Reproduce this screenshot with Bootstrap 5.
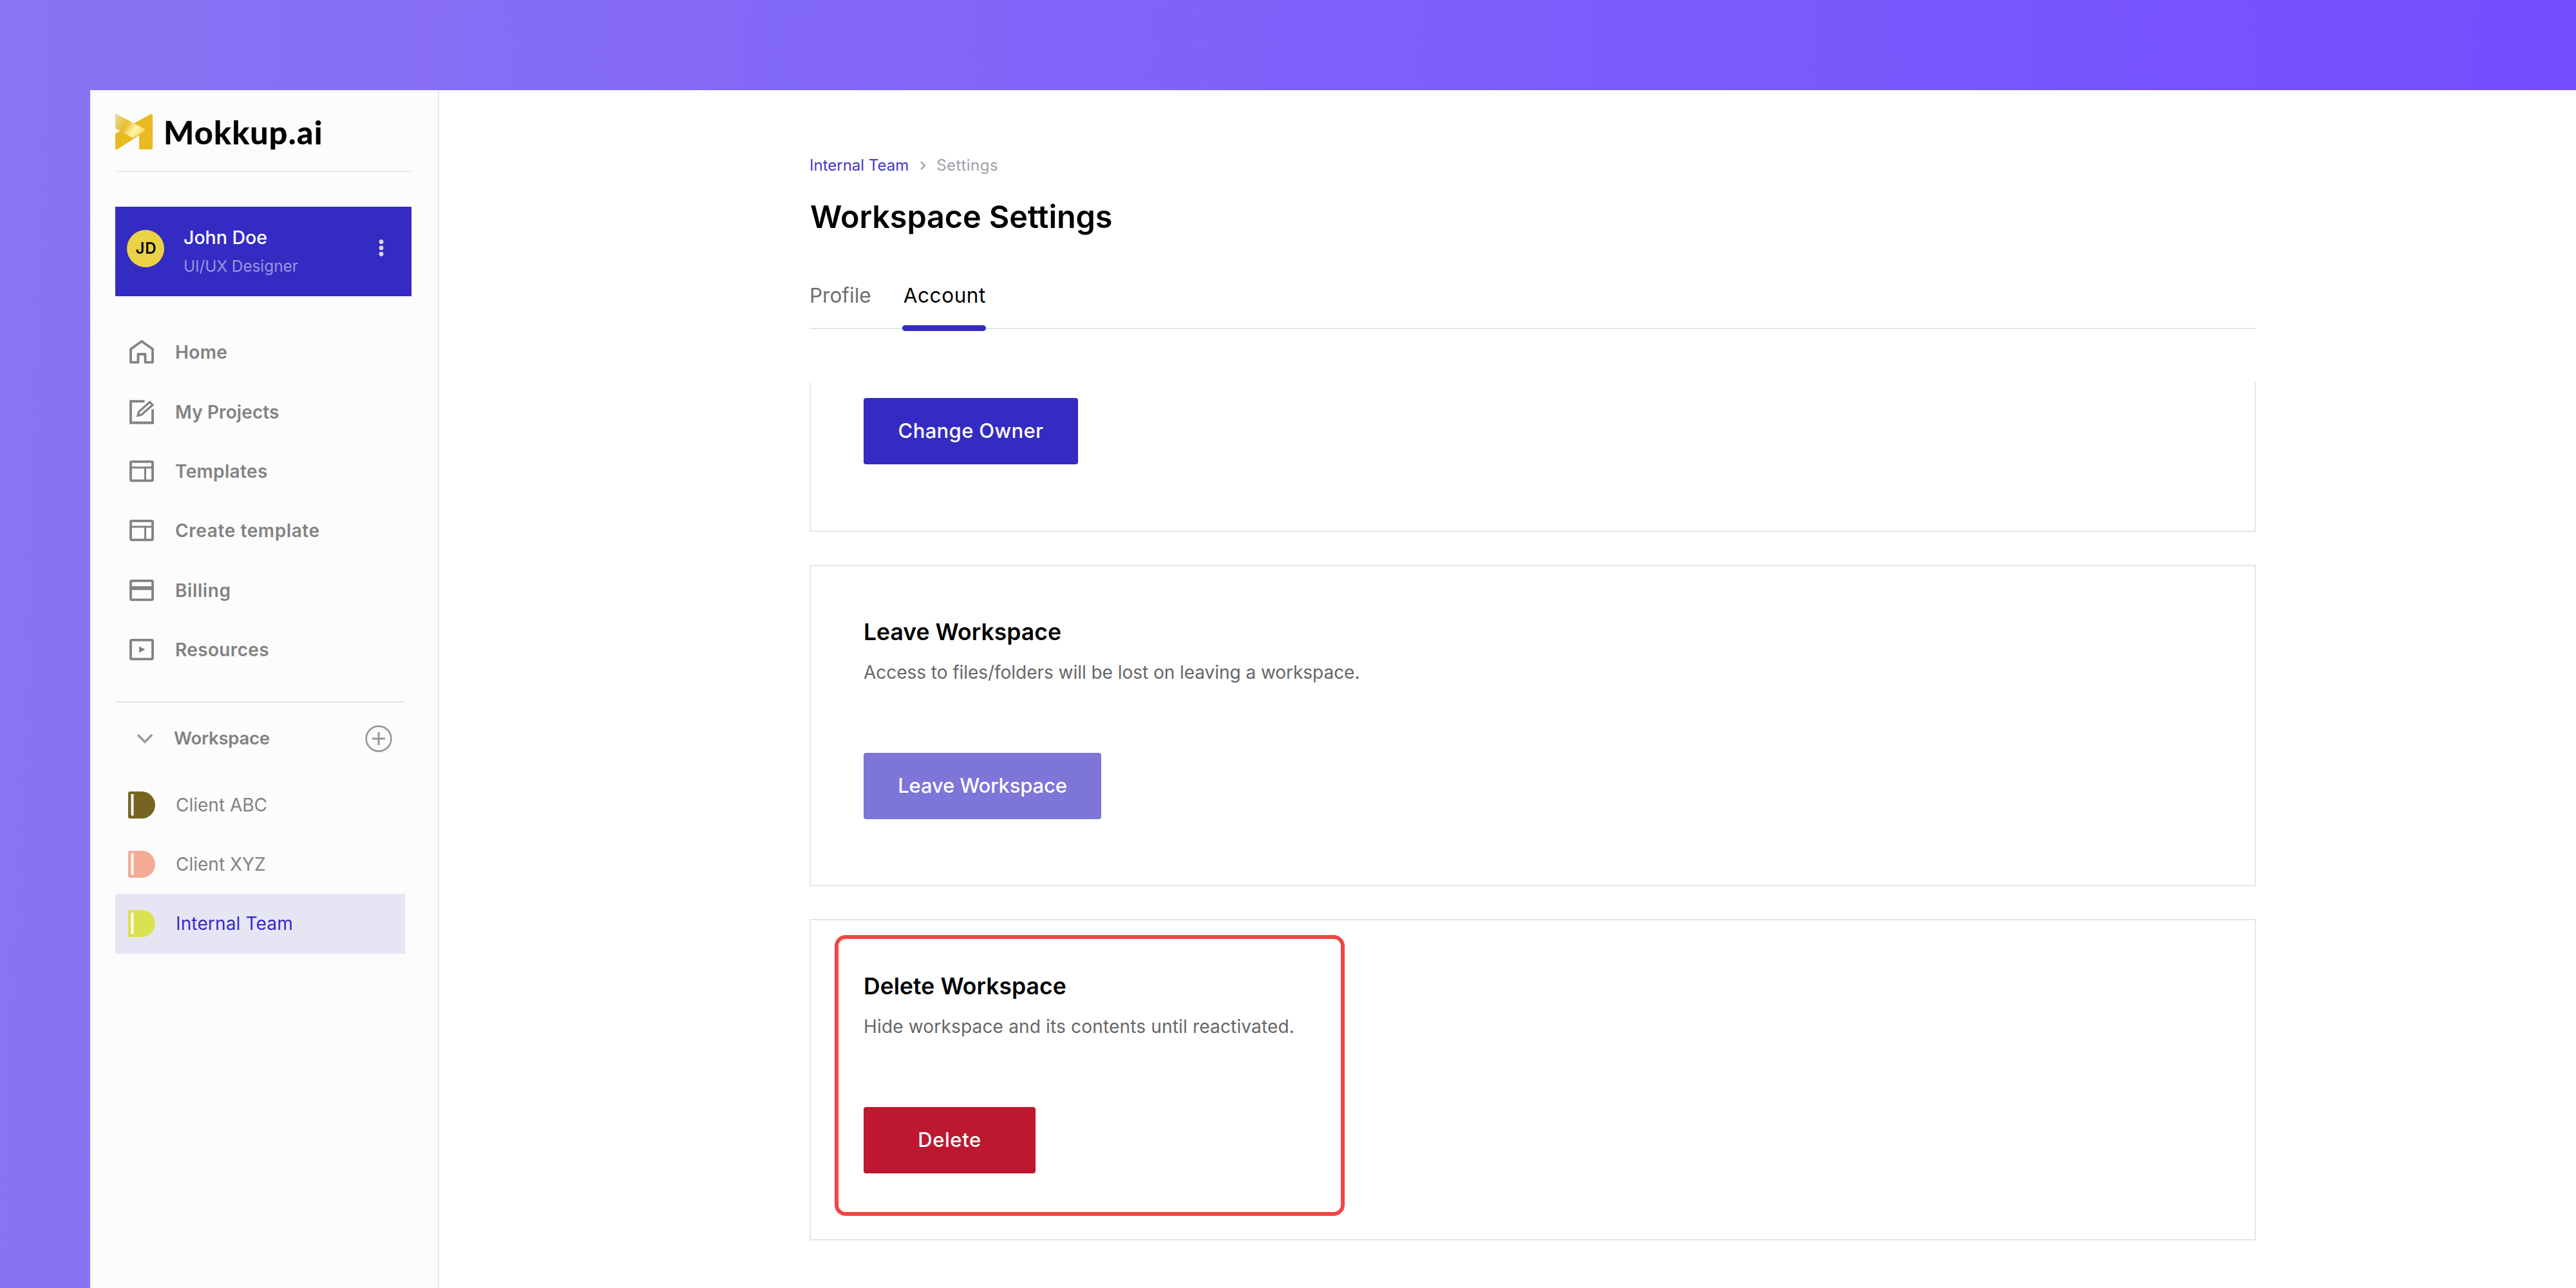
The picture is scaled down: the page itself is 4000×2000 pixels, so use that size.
<!DOCTYPE html>
<html lang="en">
<head>
<meta charset="utf-8">
<meta name="viewport" content="width=device-width, initial-scale=1">
<title>Workspace Settings</title>
<link href="https://cdn.jsdelivr.net/npm/bootstrap@5.3.0/dist/css/bootstrap.min.css" rel="stylesheet">
<style>
body{margin:0;width:4000px;height:2000px;overflow:hidden;font-family:Inter,Roboto,"Liberation Sans",sans-serif;color:#000;background:linear-gradient(92deg,#8a74f2 0%,#7e61fa 50%,#734dff 100%)}
.shell{padding:140px 0 0 140px;height:2000px}
.side{width:542px;flex:none;background:#fcfcfc;border-right:2px solid #e6e6e6;padding-left:39px}
.brand{width:460px;height:127px;padding-top:4px;border-bottom:2px solid #ebebeb}
.brand-name{font:700 50px/60px Lato,sans-serif;letter-spacing:1.4px;margin-left:17px;-webkit-text-stroke:.6px #000}
.user{width:460px;height:139px;margin-top:54px;background:#342bc2;padding-left:18px}
.avatar{width:58px;height:58px;background:#ead246;font-size:24px;font-weight:600;letter-spacing:.8px;margin-top:-9px;padding-left:2px}
.user-text{margin-left:30px;line-height:40px;font-size:28.5px;font-weight:500;color:#fff}
.user-text small{display:block;margin-top:4px;font-size:24.3px;font-weight:400;color:#9a95e0}
.dots{margin-left:auto;margin-right:41px;margin-top:-12px}
.menu{margin-top:41px}
.menu a,.spaces a{height:92.4px;color:#828282;text-decoration:none;font-size:28px;line-height:40px}
.menu a{font-weight:600;padding-left:22px;gap:33px;letter-spacing:.35px}
.menu a.tight{letter-spacing:.1px}
.menu a.loose{letter-spacing:.6px}
.menu svg{fill:none;stroke:#828282;stroke-width:3.8}
.space-head{width:450px;height:114px;margin-top:34px;border-top:2px solid #e6e6e6;font-weight:600;font-size:27.5px;letter-spacing:-.25px;color:#828282;padding:0 20px 0 33px}
.space-head span{margin-left:32px;padding-bottom:2px}
.spaces{width:450px}
.spaces a{padding-left:20px;gap:32px}
.spaces a.current{background:#e6e5f4;color:#342bc2;letter-spacing:.15px}
.main{background:#fff;padding:97px 0 0 575px}
.page{width:2246px}
.crumbs{font-size:24px;line-height:40px;color:#a0a0a8}
.crumbs a{color:#4338c8;text-decoration:none}
.crumbs span{letter-spacing:.5px}
.crumbs svg{margin:0 16px 0 17px}
.title{margin:30px 0 -1px;font-size:48.5px;line-height:60px;font-weight:600;letter-spacing:-.08px;padding-left:1px}
.tabs{height:145px;padding-top:73px;border-bottom:2px solid #e6e6e6;font-size:31.5px;line-height:40px;color:#6e6e6e;gap:50px;margin-bottom:83px}
.tabs a{color:inherit;text-decoration:none}
.tabs a.on{color:#000;letter-spacing:.6px;position:relative}
.tabs a.on::after{content:"";position:absolute;left:-2px;right:0;top:66px;height:9px;border-radius:5px;background:#342bc2}
.panel{border:2px solid #e6e6e6;height:499px;padding:78px 0 0 82px;margin-bottom:51px;position:relative}
.panel.cut{border-top:0;height:232px;padding-top:24px}
.panel h2{margin:0 0 17px;font-size:35.5px;line-height:50px;font-weight:600;letter-spacing:.05px}
.panel p{margin:0 0 105px;font-size:28px;line-height:40px;color:#666;letter-spacing:-.04px}
.panel p.wide{letter-spacing:.17px}
.act{display:flex;align-items:center;justify-content:center;height:103px;padding:0 0 2px;border:0;border-radius:4px;color:#fff!important;font-size:31px;font-weight:500;line-height:40px}
.act-owner{width:333px;background:#342bc2!important;letter-spacing:.35px}
.act-leave{width:369px;background:#7d75d7!important;letter-spacing:-.15px}
.act-delete{width:267px;background:#bd182f!important;letter-spacing:.6px}
.focus-box{position:absolute;left:37px;top:23px;width:792px;height:436px;border:6px solid #f24545;border-radius:17px}
</style>
</head>
<body>
<div class="shell d-flex">
  <aside class="side">
    <div class="brand d-flex align-items-center">
      <svg width="58" height="55" viewBox="0 0 58 55">
        <defs><linearGradient id="fold" x1="0" y1="0" x2="46" y2="30" gradientUnits="userSpaceOnUse"><stop offset="0" stop-color="#ebe0a4"/><stop offset=".14" stop-color="#e9d478"/><stop offset=".42" stop-color="#e9be2d"/><stop offset=".7" stop-color="#fff3aa"/><stop offset=".88" stop-color="#fbe27a"/><stop offset="1" stop-color="#f8c72f"/></linearGradient></defs>
        <path d="M58 2V53q0 2-2 2H39q-2 0-2-2V33L4 54.500Q2 55.500 0 55V30.500L54.500.6Q58-.8 58 2Z" fill="#e8ba20"/>
        <path d="M0 0Q2-.3 4 1L45 23Q47.500 25 45 27L29 36Q27 37 25 36L0 22.500Z" fill="url(#fold)"/>
      </svg>
      <span class="brand-name">Mokkup.ai</span>
    </div>
    <div class="user d-flex align-items-center">
      <div class="avatar rounded-circle d-flex align-items-center justify-content-center">JD</div>
      <div class="user-text">John Doe<small>UI/UX Designer</small></div>
      <svg class="dots" width="12" height="28" viewBox="0 0 12 28" fill="#dcdaf6"><circle cx="6" cy="4.500" r="3.400"/><circle cx="6" cy="14" r="3.400"/><circle cx="6" cy="23.500" r="3.400"/></svg>
    </div>
    <nav class="menu d-flex flex-column">
      <a href="#" class="d-flex align-items-center"><svg width="38" height="38" viewBox="0 0 38 38"><path d="M2 34.600V14L17.500 3Q19 1.500 20.500 3L36 14V34.600H24.500V22H13.500V34.600Z" stroke-linejoin="round"/></svg>Home</a>
      <a href="#" class="d-flex align-items-center tight"><svg width="38" height="38" viewBox="0 0 38 38"><path d="M23.500 2.200H2V35.500H36V14.500"/><path d="M13 24.500L14.500 18.500L31.500 3.200L36 7.800L19 22.800Z" stroke-width="3.200"/></svg>My Projects</a>
      <a href="#" class="d-flex align-items-center"><svg width="38" height="38" viewBox="0 0 38 38"><rect x="2" y="3.800" width="34" height="29.500" rx="1.500"/><path d="M2 13H36M24.500 13V33" stroke-width="3"/></svg>Templates</a>
      <a href="#" class="d-flex align-items-center loose"><svg width="38" height="38" viewBox="0 0 38 38"><rect x="2" y="3.800" width="34" height="29.500" rx="1.500"/><path d="M2 13H36M24.500 13V33" stroke-width="3"/></svg>Create template</a>
      <a href="#" class="d-flex align-items-center loose"><svg width="38" height="38" viewBox="0 0 38 38"><rect x="2" y="3.800" width="34" height="29.500" rx="1.500"/><path d="M2 15.300H36" stroke-width="6"/></svg>Billing</a>
      <a href="#" class="d-flex align-items-center"><svg width="38" height="38" viewBox="0 0 38 38"><rect x="2" y="3.800" width="34" height="29.500" rx="1.500"/><path d="M15 13.500L24.600 18.500L15 23.500Z" fill="#828282" stroke="none"/></svg>Resources</a>
    </nav>
    <div class="space-head d-flex align-items-center">
      <svg width="26" height="16" viewBox="0 0 26 16" fill="none" stroke="#9a9ca3" stroke-width="3.800"><path d="M2 2L13 13L24 2"/></svg>
      <span>Workspace</span>
      <svg class="ms-auto" width="42" height="42" viewBox="0 0 42 42" fill="none" stroke="#969696" stroke-width="2.600"><circle cx="21" cy="21" r="19.400"/><path d="M11 21H31M21 11V31" stroke-width="3"/></svg>
    </div>
    <div class="spaces d-flex flex-column">
      <a href="#" class="d-flex align-items-center"><svg width="42" height="42" viewBox="0 0 42 42"><path d="M3 0H21A21 21 0 0 1 21 42H3Q0 42 0 39V3Q0 0 3 0Z" fill="#776420"/><path d="M4.500 4H8.500V37.500H4.500Z" fill="#fff"/></svg>Client ABC</a>
      <a href="#" class="d-flex align-items-center"><svg width="42" height="42" viewBox="0 0 42 42"><path d="M3 0H21A21 21 0 0 1 21 42H3Q0 42 0 39V3Q0 0 3 0Z" fill="#f3ab96"/><path d="M4.500 4H8.500V37.500H4.500Z" fill="#fff"/></svg>Client XYZ</a>
      <a href="#" class="d-flex align-items-center current"><svg width="42" height="42" viewBox="0 0 42 42"><path d="M3 0H21A21 21 0 0 1 21 42H3Q0 42 0 39V3Q0 0 3 0Z" fill="#dbe24f"/><path d="M4.500 4H8.500V37.500H4.500Z" fill="#fff"/></svg>Internal Team</a>
    </div>
  </aside>
  <main class="main flex-grow-1">
    <div class="page">
      <div class="crumbs d-flex align-items-center">
        <a href="#">Internal Team</a>
        <svg width="10" height="16" viewBox="0 0 10 16" fill="none" stroke="#a0a0a8" stroke-width="2.400"><path d="M2 2L8 8L2 14"/></svg>
        <span>Settings</span>
      </div>
      <h1 class="title">Workspace Settings</h1>
      <nav class="tabs d-flex"><a href="#">Profile</a><a href="#" class="on">Account</a></nav>
      <section class="panel cut"><button class="btn act act-owner">Change Owner</button></section>
      <section class="panel">
        <h2>Leave Workspace</h2>
        <p>Access to files/folders will be lost on leaving a workspace.</p>
        <button class="btn act act-leave">Leave Workspace</button>
      </section>
      <section class="panel">
        <h2>Delete Workspace</h2>
        <p class="wide">Hide workspace and its contents until reactivated.</p>
        <button class="btn act act-delete">Delete</button>
        <div class="focus-box"></div>
      </section>
    </div>
  </main>
</div>
<script src="https://cdn.jsdelivr.net/npm/bootstrap@5.3.0/dist/js/bootstrap.bundle.min.js"></script>
</body>
</html>
